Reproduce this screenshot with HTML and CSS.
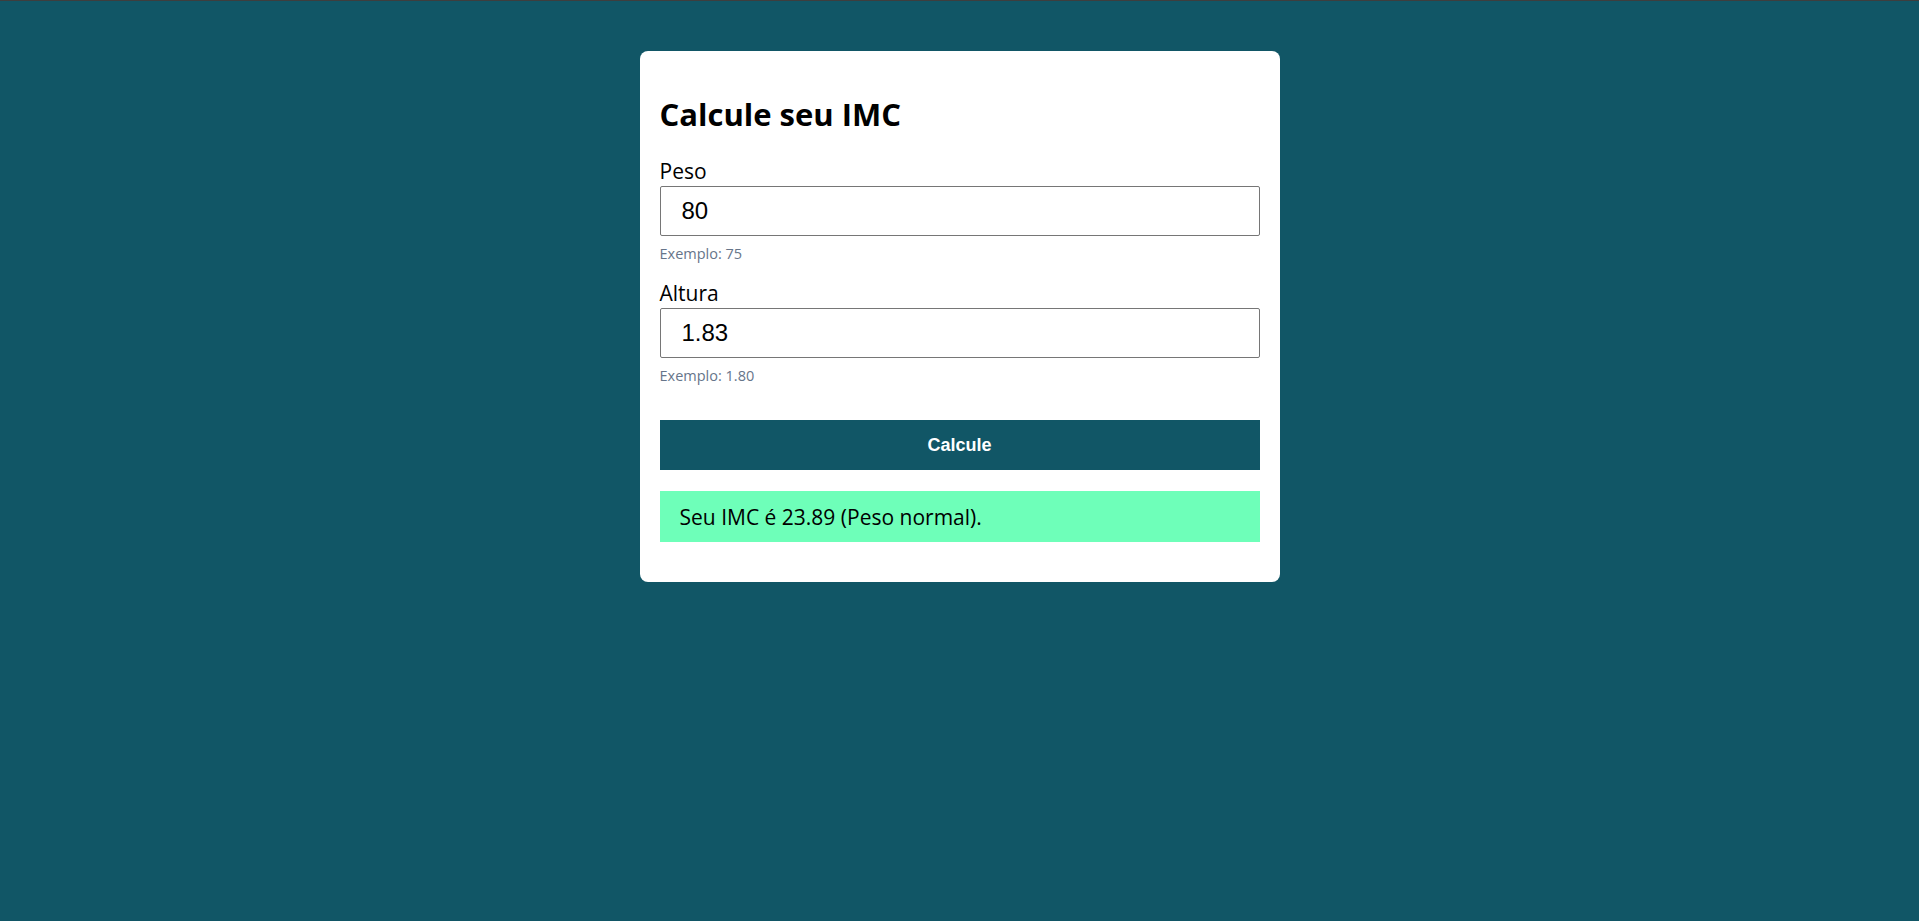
FILE: index.html
```html
<!DOCTYPE html>
<html lang="pt-BR">
<head>
<meta charset="utf-8">
<title>Calcule seu IMC</title>
<link rel="stylesheet" href="styles.css">
</head>
<body>
<main class="card">
  <h1 class="title">Calcule seu IMC</h1>
  <div class="group">
    <label class="label" for="peso">Peso</label>
    <input class="input" id="peso" type="text" value="80">
    <small class="hint">Exemplo: 75</small>
  </div>
  <div class="group">
    <label class="label" for="altura">Altura</label>
    <input class="input" id="altura" type="text" value="1.83">
    <small class="hint">Exemplo: 1.80</small>
  </div>
  <button class="button" type="button">Calcule</button>
  <div class="result">Seu IMC é 23.89 (Peso normal).</div>
</main>
</body>
</html>
```
FILE: styles.css
```css
html, body {
  margin: 0;
  padding: 0;
}
body {
  background: #115666;
  border-top: 1px solid #3e3e3e;
  min-height: 920px;
  font-family: "Open Sans", "Noto Sans", sans-serif;
  color: #000;
}
.card {
  width: 640px;
  box-sizing: border-box;
  margin: 50px auto 0;
  padding: 20px;
  background: #fff;
  border-radius: 8px;
}
.title {
  font-size: 31px;
  font-weight: 700;
  margin: 21px 0 21px;
  line-height: 44px;
}
.group {
  margin-bottom: 16px;
}
.label {
  display: block;
  font-size: 21px;
  line-height: 29px;
}
.input {
  display: block;
  width: 100%;
  height: 50px;
  box-sizing: border-box;
  border: 1px solid #767676;
  border-radius: 2px;
  padding: 0 21px;
  margin: 0;
  font-family: "Liberation Sans", Arial, sans-serif;
  font-size: 24px;
  color: #000;
  background: #fff;
}
.hint {
  display: block;
  margin-top: 8px;
  font-size: 14.5px;
  line-height: 19px;
  color: #66758a;
}
.button {
  display: block;
  width: 100%;
  height: 50px;
  margin: 35px 0 0;
  border: none;
  background: #115666;
  color: #fff;
  font-family: "Liberation Sans", Arial, sans-serif;
  font-size: 18px;
  font-weight: 700;
}
.result {
  margin: 21px 0 20px;
  height: 51px;
  box-sizing: border-box;
  padding: 0 20px;
  display: flex;
  align-items: center;
  background: #6effb9;
  font-size: 21px;
}
```
